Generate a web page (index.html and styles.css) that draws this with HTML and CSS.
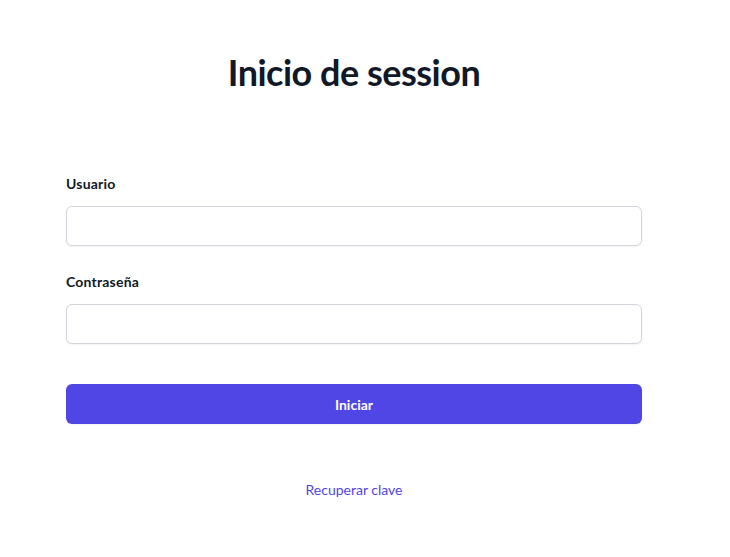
FILE: index.html
```html
<!DOCTYPE html>
<html lang="es">
<head>
<meta charset="utf-8">
<title>Inicio de session</title>
<link rel="stylesheet" href="styles.css">
</head>
<body>
<main class="wrap">
  <h1 class="title">Inicio de session</h1>
  <form class="form">
    <div class="field">
      <label class="label" for="u">Usuario</label>
      <input class="input" id="u" type="text">
    </div>
    <div class="field">
      <label class="label" for="p">Contraseña</label>
      <input class="input" id="p" type="password">
    </div>
    <button class="btn" type="button">Iniciar</button>
  </form>
  <p class="more"><a class="link" href="#">Recuperar clave</a></p>
</main>
</body>
</html>
```
FILE: styles.css
```css
html, body { margin: 0; padding: 0; background: #fff; }
body { font-family: Lato, "Open Sans", sans-serif; color: #111827; }
.wrap { width: 576px; margin-left: 66px; padding-top: 52px; }
.title { margin: 0; font-size: 36px; line-height: 40px; font-weight: 700; text-align: center; color: #111827; letter-spacing: -0.5px; }
.form { margin-top: 82px; display: flex; flex-direction: column; }
.field { display: flex; flex-direction: column; margin-bottom: 26px; }
.field + .field { margin-bottom: 40px; }
.label { font-size: 14px; line-height: 20px; font-weight: 700; margin-bottom: 12px; color: #111827; letter-spacing: 0.2px; }
.input { box-sizing: border-box; height: 40px; width: 100%; border: 1px solid #d1d5db; border-radius: 6px; box-shadow: 0 1px 2px rgba(0,0,0,0.05); background: #fff; font: inherit; padding: 0 12px; }
.btn { box-sizing: border-box; height: 40px; width: 100%; border: 0; border-radius: 6px; background: #4f46e5; color: #fff; font: inherit; font-size: 14px; font-weight: 700; box-shadow: 0 1px 2px rgba(0,0,0,0.05); cursor: pointer; }
.more { margin: 56px 0 0; text-align: center; font-size: 14px; line-height: 20px; }
.link { color: #4f46e5; text-decoration: none; }
```
